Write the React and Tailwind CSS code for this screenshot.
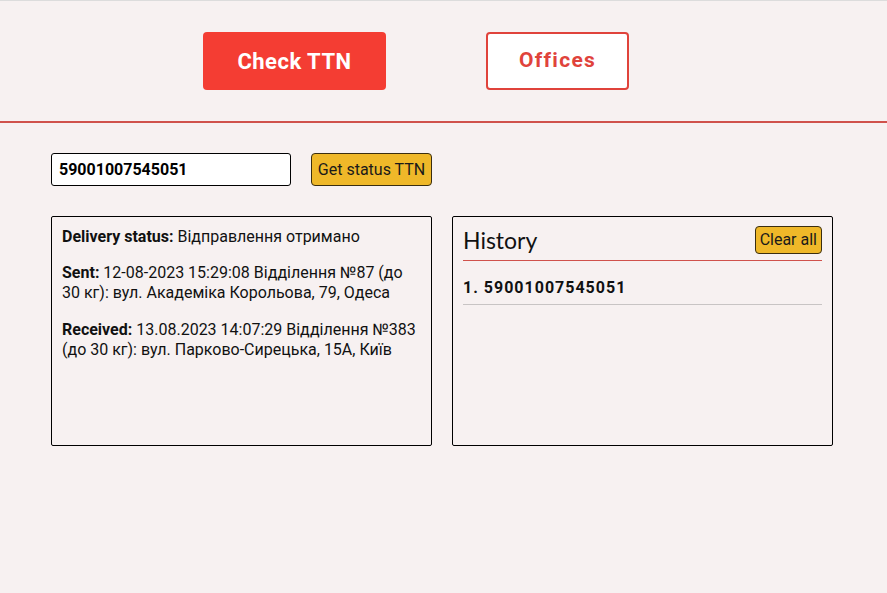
const historyItems = ['59001007545051'];

const App = () => {
  return (
    <div className="min-h-[593px] bg-[#f7f1f1] border-t border-[#dcdcdc] font-['Roboto',sans-serif] text-black">
      <header className="flex items-center gap-[100px] pl-[203px] h-[122px] border-b-2 border-[#d0524c]">
        <button
          type="button"
          className="w-[183px] h-[58px] rounded-[4px] bg-[#f43d33] text-white text-[22px] font-bold tracking-[0.5px]"
        >
          Check TTN
        </button>
        <button
          type="button"
          className="w-[143px] h-[58px] rounded-[4px] bg-white border-2 border-[#e0433b] text-[#e0433b] text-[21px] font-bold tracking-[1.3px]"
        >
          Offices
        </button>
      </header>

      <main className="px-[51px] pt-[30px]">
        <div className="flex items-center gap-[20px]">
          <input
            type="text"
            defaultValue="59001007545051"
            className="w-[240px] h-[33px] px-[7px] bg-white border border-black rounded-[3px] text-[16px] font-bold outline-none"
          />
          <button
            type="button"
            className="w-[121px] h-[33px] bg-[#efb829] border border-[#3a2e10] rounded-[4px] text-[16px] text-[#1a1a1a]"
          >
            Get status TTN
          </button>
        </div>

        <div className="flex gap-[20px] mt-[30px]">
          <section className="w-[381px] h-[230px] border border-black rounded-[2px] px-[10px] pt-[10px] text-[16px] leading-[20px] text-[#111]">
            <p>
              <b>Delivery status:</b> Відправлення отримано
            </p>
            <p className="mt-[16px]">
              <b>Sent:</b> 12-08-2023 15:29:08 Відділення №87 (до 30 кг): вул. Академіка Корольова, 79, Одеса
            </p>
            <p className="mt-[17px]">
              <b>Received:</b> 13.08.2023 14:07:29 Відділення №383 (до 30 кг): вул. Парково-Сирецька, 15А, Київ
            </p>
          </section>

          <section className="w-[381px] h-[230px] border border-black rounded-[2px] px-[10px] pt-[8px]">
            <div className="flex items-center justify-between pb-[5px] border-b border-[#d0524c]">
              <h2 className="text-[23px] leading-[30px] font-['Lato',sans-serif] text-[#111]">History</h2>
              <button
                type="button"
                className="h-[28px] px-[4px] bg-[#efb829] border border-[#3a2e10] rounded-[4px] text-[16px] text-[#1a1a1a]"
              >
                Clear all
              </button>
            </div>
            <ul>
              {historyItems.map((item, index) => (
                <li
                  key={item}
                  className="pt-[17px] pb-[6px] border-b border-[#c8c4c4] text-[16px] leading-[20px] font-bold tracking-[1px] text-[#111]"
                >
                  {index + 1}. {item}
                </li>
              ))}
            </ul>
          </section>
        </div>
      </main>
    </div>
  );
};

export default App;
